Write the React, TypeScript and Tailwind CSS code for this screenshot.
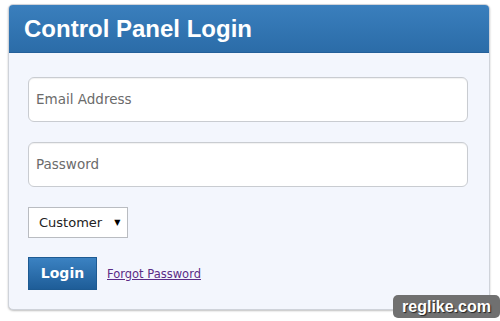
export default function App() {
  return (
    <div className="relative w-[500px] h-[321px] bg-white overflow-hidden">
      <div className="absolute left-[8px] top-[4px] w-[482px] h-[306px] rounded-[5px] border border-[#cfd3da] bg-[#f3f6fd] shadow-[0_1px_2px_rgba(0,0,0,0.25)] flex flex-col overflow-hidden">
        <div className="h-[48px] shrink-0 bg-gradient-to-b from-[#3a7fbd] to-[#2b6ca8] flex items-center pl-[15px] border-b border-[#24609a]">
          <span className="text-white font-bold text-[24px] [font-family:'Liberation_Sans',Arial,sans-serif]">
            Control Panel Login
          </span>
        </div>
        <div className="flex flex-col px-[19px] pt-[24px] [font-family:'DejaVu_Sans',Verdana,sans-serif]">
          <div className="w-[440px] h-[45px] rounded-[6px] border border-[#c9ccd1] bg-white flex items-center pl-[7px] text-[13.5px] text-[#6b6b6b] shadow-[inset_0_1px_1px_rgba(0,0,0,0.06)]">
            Email Address
          </div>
          <div className="mt-[20px] w-[440px] h-[45px] rounded-[6px] border border-[#c9ccd1] bg-white flex items-center pl-[7px] text-[13.5px] text-[#6b6b6b] shadow-[inset_0_1px_1px_rgba(0,0,0,0.06)]">
            Password
          </div>
          <div className="mt-[20px] w-[100px] h-[31px] border border-[#b9bcc1] bg-white flex items-center pl-[10px] text-[13px] text-[#222]">
            <span>Customer</span>
            <span className="ml-[12px] text-[8px] text-black">▼</span>
          </div>
          <div className="mt-[19px] flex items-center">
            <div className="w-[69px] h-[33px] bg-gradient-to-b from-[#3b82c2] to-[#1e5d98] border border-[#1d5a92] flex items-center justify-center text-white font-bold text-[14px]">
              Login
            </div>
            <a className="ml-[10px] mt-[2px] text-[11.5px] text-[#5b2c86] underline">Forgot Password</a>
          </div>
        </div>
      </div>
      <div className="absolute left-[393px] top-[295px] w-[107px] h-[23px] rounded-[5px] bg-[#707070] flex items-center justify-center">
        <span className="text-white font-bold text-[16px] [font-family:'Liberation_Sans',Arial,sans-serif] [text-shadow:1px_1px_1px_#222]">
          reglike.com
        </span>
      </div>
    </div>
  );
}
